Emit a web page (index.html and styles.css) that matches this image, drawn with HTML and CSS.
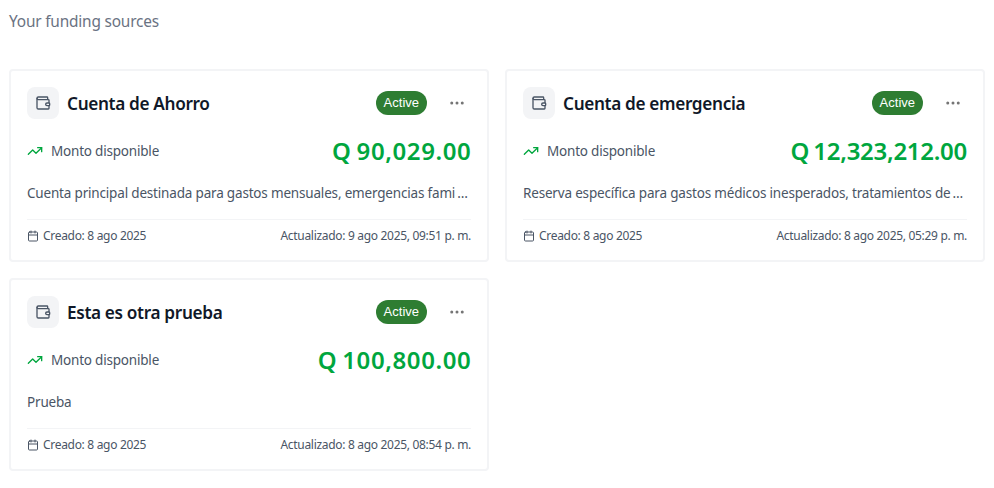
FILE: index.html
```
<!DOCTYPE html>
<html lang="es">
<head>
<meta charset="utf-8">
<title>Funding sources</title>
<link rel="stylesheet" href="styles.css">
</head>
<body>
<svg class="defs" aria-hidden="true">
  <symbol id="wallet" viewBox="0 0 24 24"><path d="M19 7V4a1 1 0 0 0-1-1H5a2 2 0 0 0 0 4h15a1 1 0 0 1 1 1v4h-3a2 2 0 0 0 0 4h3a1 1 0 0 0 1-1v-2a1 1 0 0 0-1-1"/><path d="M3 5v14a2 2 0 0 0 2 2h15a1 1 0 0 0 1-1v-4"/></symbol>
  <symbol id="trend" viewBox="0 0 24 24"><path d="M22 7 13.5 15.5 8.5 10.5 2 17"/><path d="M16 7h6v6"/></symbol>
  <symbol id="calendar" viewBox="0 0 24 24"><path d="M8 2v4M16 2v4M3 10h18"/><rect x="3" y="4" width="18" height="18" rx="2"/></symbol>
  <symbol id="dots" viewBox="0 0 24 24"><circle cx="5" cy="12" r="2"/><circle cx="12" cy="12" r="2"/><circle cx="19" cy="12" r="2"/></symbol>
</svg>
<p class="subtitle">Your funding sources</p>
<main class="grid">
  <article class="card">
    <header class="head">
      <span class="tile"><svg class="icon"><use href="#wallet"/></svg></span>
      <h2 class="name">Cuenta de Ahorro</h2>
      <span class="badge">Active</span>
      <button class="menu" aria-label="Opciones"><svg><use href="#dots"/></svg></button>
    </header>
    <div class="balance">
      <svg class="icon trend"><use href="#trend"/></svg><span class="label">Monto disponible</span>
      <strong class="amount">Q 90,029.00</strong>
    </div>
    <p class="desc">Cuenta principal destinada para gastos mensuales, emergencias fami<span class="more">…</span></p>
    <footer class="foot">
      <span class="date"><svg class="icon small"><use href="#calendar"/></svg><span class="created">Creado: 8 ago 2025</span></span>
      <span class="updated">Actualizado: 9 ago 2025, 09:51 p. m.</span>
    </footer>
  </article>
  <article class="card">
    <header class="head">
      <span class="tile"><svg class="icon"><use href="#wallet"/></svg></span>
      <h2 class="name">Cuenta de emergencia</h2>
      <span class="badge">Active</span>
      <button class="menu" aria-label="Opciones"><svg><use href="#dots"/></svg></button>
    </header>
    <div class="balance">
      <svg class="icon trend"><use href="#trend"/></svg><span class="label">Monto disponible</span>
      <strong class="amount amount-long">Q 12,323,212.00</strong>
    </div>
    <p class="desc">Reserva específica para gastos médicos inesperados, tratamientos de<span class="more">…</span></p>
    <footer class="foot">
      <span class="date"><svg class="icon small"><use href="#calendar"/></svg><span class="created">Creado: 8 ago 2025</span></span>
      <span class="updated">Actualizado: 8 ago 2025, 05:29 p. m.</span>
    </footer>
  </article>
  <article class="card">
    <header class="head">
      <span class="tile"><svg class="icon"><use href="#wallet"/></svg></span>
      <h2 class="name">Esta es otra prueba</h2>
      <span class="badge">Active</span>
      <button class="menu" aria-label="Opciones"><svg><use href="#dots"/></svg></button>
    </header>
    <div class="balance">
      <svg class="icon trend"><use href="#trend"/></svg><span class="label">Monto disponible</span>
      <strong class="amount">Q 100,800.00</strong>
    </div>
    <p class="desc">Prueba</p>
    <footer class="foot">
      <span class="date"><svg class="icon small"><use href="#calendar"/></svg><span class="created">Creado: 8 ago 2025</span></span>
      <span class="updated">Actualizado: 8 ago 2025, 08:54 p. m.</span>
    </footer>
  </article>
</main>
</body>
</html>
```

FILE: styles.css
```
* { box-sizing: border-box; margin: 0; }
body { padding: 9px; background: #fff; color: #4a5565; font-family: "Noto Sans", sans-serif; }
.defs { display: none; }
.subtitle { height: 60px; color: #6a7282; font-size: 15.4px; line-height: 25px; letter-spacing: -0.18px; }
.grid { display: grid; grid-template-columns: 480px 480px; gap: 16px; }
.card { height: 193px; border: 2px solid #f3f4f6; border-radius: 4px; padding: 16px; }
.icon { width: 16px; height: 16px; flex: none; fill: none; stroke: currentColor; stroke-width: 2; stroke-linecap: round; stroke-linejoin: round; }
.head { display: flex; align-items: center; height: 32px; }
.tile { display: flex; align-items: center; justify-content: center; width: 32px; height: 32px; border-radius: 8px; background: #f3f4f6; }
.name { flex: 1; margin-left: 8px; padding-top: 2px; color: #101828; font-size: 17.2px; font-weight: 650; line-height: 28px; letter-spacing: -0.34px; white-space: nowrap; }
.badge { height: 24px; padding: 0 8px; border-radius: 16px; background: #2e7d32; color: #fff; font: 13px/24px "Liberation Sans", sans-serif; }
.menu { display: flex; align-items: center; justify-content: center; width: 28px; height: 28px; margin-left: 16px; padding: 0; border: 0; background: none; color: #757575; }
.menu svg { width: 18px; height: 18px; fill: currentColor; }
.balance { display: flex; align-items: center; height: 32px; margin-top: 16px; }
.trend { color: #00a63e; }
.label { margin-left: 8px; font-size: 13.5px; line-height: 20px; letter-spacing: -0.2px; }
.amount { margin-left: auto; color: #00a63e; font-size: 24px; font-weight: 650; line-height: 32px; letter-spacing: 0.6px; word-spacing: -1.8px; margin-right: -0.4px; }
.amount-long { margin-right: 0; letter-spacing: -0.28px; }
.desc { height: 24px; margin-top: 14px; font-size: 13.5px; line-height: 24px; letter-spacing: -0.18px; white-space: nowrap; }
.more { letter-spacing: 0; margin-left: 2px; }
.foot { display: flex; align-items: center; justify-content: space-between; height: 33px; margin-top: 14px; border-top: 1px solid #f3f4f6; font-size: 12px; line-height: 16px; letter-spacing: -0.31px; }
.date { display: flex; align-items: center; gap: 4px; }
.small { width: 12px; height: 12px; }
```
